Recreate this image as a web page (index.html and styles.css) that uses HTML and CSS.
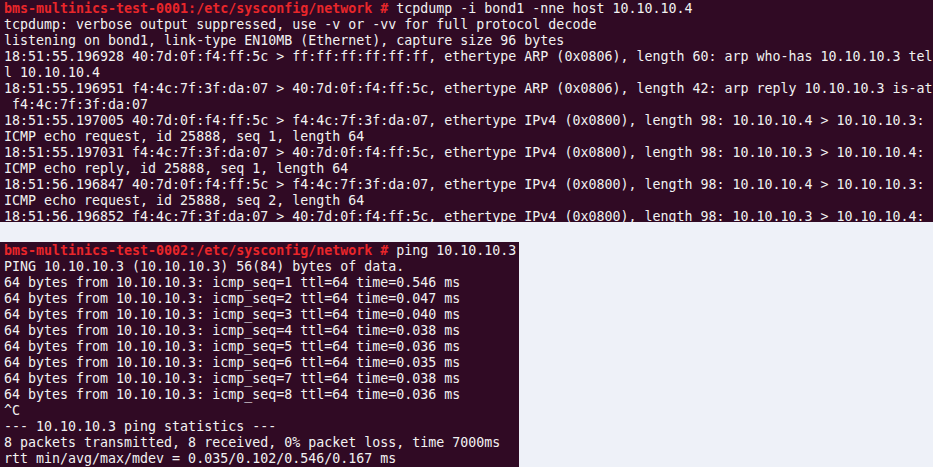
FILE: index.html
```html
<!DOCTYPE html>
<html>
<head>
<meta charset="utf-8">
<link rel="stylesheet" href="styles.css">
</head>
<body>
<div class="term term-wide"><pre class="out"><span class="prompt">bms-multinics-test-0001:/etc/sysconfig/network # </span>tcpdump -i bond1 -nne host 10.10.10.4
tcpdump: verbose output suppressed, use -v or -vv for full protocol decode
listening on bond1, link-type EN10MB (Ethernet), capture size 96 bytes
18:51:55.196928 40:7d:0f:f4:ff:5c &gt; ff:ff:ff:ff:ff:ff, ethertype ARP (0x0806), length 60: arp who-has 10.10.10.3 tel
l 10.10.10.4
18:51:55.196951 f4:4c:7f:3f:da:07 &gt; 40:7d:0f:f4:ff:5c, ethertype ARP (0x0806), length 42: arp reply 10.10.10.3 is-at
 f4:4c:7f:3f:da:07
18:51:55.197005 40:7d:0f:f4:ff:5c &gt; f4:4c:7f:3f:da:07, ethertype IPv4 (0x0800), length 98: 10.10.10.4 &gt; 10.10.10.3:
ICMP echo request, id 25888, seq 1, length 64
18:51:55.197031 f4:4c:7f:3f:da:07 &gt; 40:7d:0f:f4:ff:5c, ethertype IPv4 (0x0800), length 98: 10.10.10.3 &gt; 10.10.10.4:
ICMP echo reply, id 25888, seq 1, length 64
18:51:56.196847 40:7d:0f:f4:ff:5c &gt; f4:4c:7f:3f:da:07, ethertype IPv4 (0x0800), length 98: 10.10.10.4 &gt; 10.10.10.3:
ICMP echo request, id 25888, seq 2, length 64
18:51:56.196852 f4:4c:7f:3f:da:07 &gt; 40:7d:0f:f4:ff:5c, ethertype IPv4 (0x0800), length 98: 10.10.10.3 &gt; 10.10.10.4:</pre></div>
<div class="term term-narrow"><pre class="out"><span class="prompt">bms-multinics-test-0002:/etc/sysconfig/network # </span>ping 10.10.10.3
PING 10.10.10.3 (10.10.10.3) 56(84) bytes of data.
64 bytes from 10.10.10.3: icmp_seq=1 ttl=64 time=0.546 ms
64 bytes from 10.10.10.3: icmp_seq=2 ttl=64 time=0.047 ms
64 bytes from 10.10.10.3: icmp_seq=3 ttl=64 time=0.040 ms
64 bytes from 10.10.10.3: icmp_seq=4 ttl=64 time=0.038 ms
64 bytes from 10.10.10.3: icmp_seq=5 ttl=64 time=0.036 ms
64 bytes from 10.10.10.3: icmp_seq=6 ttl=64 time=0.035 ms
64 bytes from 10.10.10.3: icmp_seq=7 ttl=64 time=0.038 ms
64 bytes from 10.10.10.3: icmp_seq=8 ttl=64 time=0.036 ms
^C
--- 10.10.10.3 ping statistics ---
8 packets transmitted, 8 received, 0% packet loss, time 7000ms
rtt min/avg/max/mdev = 0.035/0.102/0.546/0.167 ms</pre></div>
</body>
</html>
```
FILE: styles.css
```css
html, body {
  margin: 0;
  padding: 0;
  background: #eef1f8;
  height: 467px;
  overflow: hidden;
}
body {
  display: flex;
  flex-direction: column;
  gap: 20px;
}
.term {
  background: #300a24;
  color: #f2f2f2;
  overflow: hidden;
  box-sizing: border-box;
  padding-left: 4px;
  padding-top: 1px;
}
.term-wide {
  width: 933px;
  height: 222px;
}
.term-narrow {
  width: 519px;
  height: 225px;
}
.out {
  margin: 0;
  font-family: "DejaVu Sans Mono", monospace;
  font-size: 13.3px;
  line-height: 16px;
  white-space: pre;
}
.prompt {
  color: #e8262a;
  font-weight: bold;
}
```
